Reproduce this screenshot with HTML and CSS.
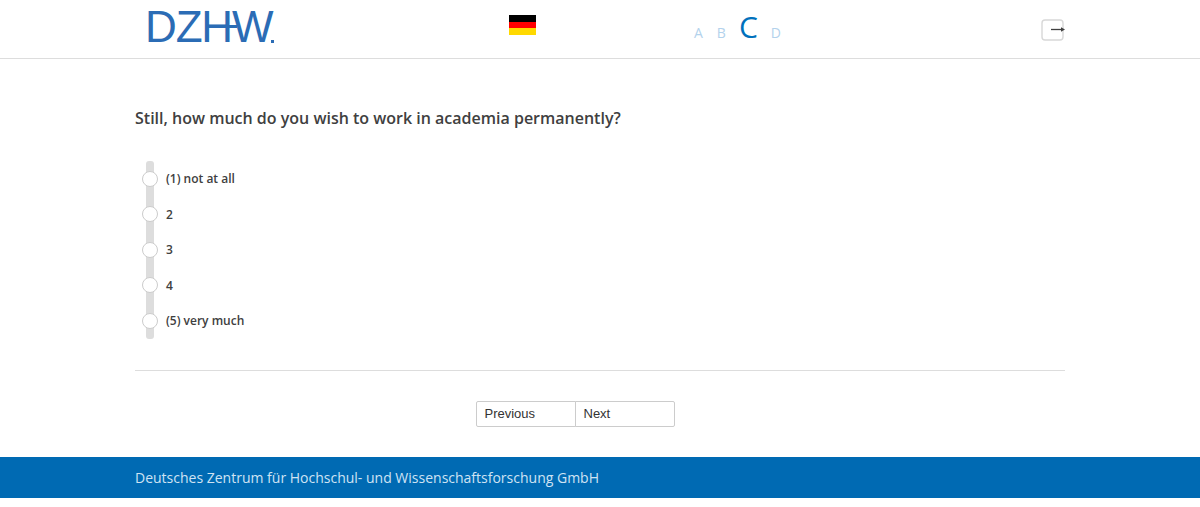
FILE: index.html
```html
<!DOCTYPE html>
<html lang="en">
<head>
    <meta charset="UTF-8">
    <title>DZHW Survey</title>
    <link rel="stylesheet" href="styles.css">
</head>
<body>
    <header class="site-header">
        <div class="header-inner">
            <div class="logo"><span class="logo-d">D</span><span class="logo-z">Z</span><span class="logo-h">H</span><span>W</span><span class="logo-dot"></span><span class="logo-bar"></span></div>
            <div class="flag"><span class="flag-black"></span><span class="flag-red"></span><span class="flag-gold"></span></div>
            <div class="versions">
                <span>A</span>
                <span>B</span>
                <span class="current">C</span>
                <span>D</span>
            </div>
            <svg class="exit-icon" width="26" height="22" viewBox="0 0 26 22">
                <rect x="3" y="1" width="21" height="20" rx="3" fill="none" stroke="#d8d8d8" stroke-width="1.4"/>
                <path d="M12 10.500h11" stroke="#404040" stroke-width="1.300"/>
                <path d="M22 8.300l4 2.200-4 2.200z" fill="#404040"/>
            </svg>
        </div>
    </header>

    <main class="content">
        <h1 class="question">Still, how much do you wish to work in academia permanently?</h1>

        <div class="scale">
            <div class="scale-track"></div>
            <label class="option"><span class="radio"></span>(1) not at all</label>
            <label class="option"><span class="radio"></span>2</label>
            <label class="option"><span class="radio"></span>3</label>
            <label class="option"><span class="radio"></span>4</label>
            <label class="option"><span class="radio"></span>(5) very much</label>
        </div>

        <hr class="divider">

        <div class="nav-buttons">
            <button class="nav-btn">Previous</button>
            <button class="nav-btn">Next</button>
        </div>
    </main>

    <footer class="site-footer">
        <div class="footer-inner">Deutsches Zentrum für Hochschul- und Wissenschaftsforschung GmbH</div>
    </footer>
</body>
</html>
```

FILE: styles.css
```css
body {
    margin: 0;
    background: #fff;
    font-family: "Open Sans", sans-serif;
    color: #404040;
}

.site-header {
    height: 58px;
    border-bottom: 1px solid #ddd;
}

.header-inner {
    width: 930px;
    height: 58px;
    margin: 0 auto;
    display: flex;
    align-items: flex-start;
    position: relative;
}

.logo {
    position: relative;
    flex: none;
    margin: 5px 0 0 10px;
    width: 364px;
    font-family: "Liberation Sans", sans-serif;
    font-size: 44px;
    line-height: 44px;
    color: #2b6cb5;
}

.logo-z {
    margin-left: -1px;
}

.logo-h {
    margin-left: -1.5px;
    margin-right: -1px;
}

.logo-dot {
    position: absolute;
    left: 126px;
    top: 35px;
    width: 3px;
    height: 3px;
    background: #2b6cb5;
}

/* crossbar of the H runs on into the W */
.logo-bar {
    position: absolute;
    left: 78px;
    top: 20px;
    width: 14px;
    height: 3px;
    background: #2b6cb5;
}

.flag {
    flex: none;
    width: 27px;
    height: 20px;
    margin-top: 15px;
    display: flex;
    flex-direction: column;
}

.flag span {
    flex: 1;
}

.flag-black {
    background: #000;
}

.flag-red {
    background: #f00;
}

.flag-gold {
    background: #ffd900;
}

.versions {
    margin-left: 158px;
    margin-top: 5px;
    height: 44px;
    display: flex;
    align-items: baseline;
    gap: 14px;
    font-size: 14px;
    line-height: 44px;
    color: #b3d2ec;
}

.versions .current {
    margin-left: -1px;
    font-size: 30px;
    letter-spacing: -1px;
    color: #0071bc;
}

.exit-icon {
    position: absolute;
    right: 0;
    top: 19px;
}

.content {
    width: 930px;
    margin: 0 auto;
}

.question {
    margin: 0;
    padding-top: 48px;
    font-size: 16px;
    line-height: 22px;
    font-weight: 600;
    color: #404040;
}

.scale {
    position: relative;
    margin-top: 32px;
    padding: 0 0 0 7px;
    height: 178px;
    box-sizing: border-box;
    display: flex;
    flex-direction: column;
    justify-content: flex-start;
}

.scale-track {
    position: absolute;
    left: 11px;
    top: 0;
    bottom: 0;
    width: 8px;
    border-radius: 3px;
    background: #ddd;
}

.option {
    position: relative;
    display: flex;
    align-items: center;
    gap: 8px;
    height: 35.5px;
    font-size: 12px;
    font-weight: 600;
    color: #404040;
}

.radio {
    width: 14px;
    height: 14px;
    border: 1px solid #ccc;
    border-radius: 50%;
    background: #fff;
}

.divider {
    margin: 31px 0 0;
    border: 0;
    border-top: 1px solid #ddd;
}

.nav-buttons {
    display: flex;
    justify-content: center;
    margin-top: 30px;
    margin-bottom: 30px;
    margin-right: 50px;
}

.nav-btn {
    width: 100px;
    height: 26px;
    padding: 0 8px 2px;
    text-align: left;
    background: #fff;
    border: 1px solid #ccc;
    font-family: "Liberation Sans", sans-serif;
    font-size: 13px;
    color: #333;
}

.nav-btn:first-child {
    border-radius: 2px 0 0 2px;
}

.nav-btn:last-child {
    margin-left: -1px;
    border-radius: 0 2px 2px 0;
}

.site-footer {
    height: 41px;
    background: #006ab3;
}

.footer-inner {
    width: 930px;
    margin: 0 auto;
    font-size: 14px;
    line-height: 41px;
    color: #cfe3f3;
}
```
